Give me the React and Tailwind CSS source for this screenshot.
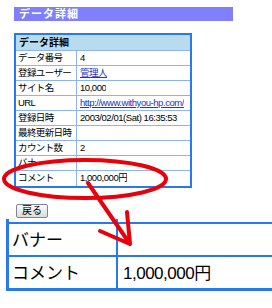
import React from "react";

const font = { fontFamily: '"Liberation Sans", "Noto Sans CJK JP", sans-serif' };

const rows = [
  ["データ番号", "4"],
  ["登録ユーザー", { link: "管理人" }],
  ["サイト名", "10,000"],
  ["URL", { link: "http://www.withyou-hp.com/" }],
  ["登録日時", "2003/02/01(Sat) 16:35:53"],
  ["最終更新日時", ""],
  ["カウント数", "2"],
  ["バナー", ""],
  ["コメント", "1,000,000円"],
];

export default function App() {
  return (
    <div
      className="relative w-[272px] h-[308px] bg-white overflow-hidden text-black"
      style={font}
    >
      <div className="mt-[7px] ml-[14px] w-[219px] h-[14px] bg-[#8080ff] text-white text-[11px] font-bold leading-[14px] pl-[5px] tracking-[1px]">
        データ詳細
      </div>

      <div className="mt-[12px] ml-[14px] w-[178px] border-2 border-[#2a78f0]">
        <div className="h-[16px] bg-[#b8dcee] border-b border-[#8cb4f4] text-[10px] font-bold leading-[16px] pl-[3px]">
          データ詳細
        </div>
        {rows.map(([k, v], i) => (
          <div
            key={i}
            className={
              "flex h-[15px] text-[9.5px] leading-[14px] " +
              (i < rows.length - 1 ? "border-b border-[#8cb4f4]" : "")
            }
          >
            <div className="w-[61px] shrink-0 border-r border-[#8cb4f4] pl-[2px] whitespace-nowrap overflow-hidden tracking-[-0.6px]">
              {k}
            </div>
            <div className="pl-[3px] whitespace-nowrap overflow-hidden tracking-[-0.45px]">
              {typeof v === "object" ? (
                <span className="text-[#2233cc] underline">{v.link}</span>
              ) : (
                v
              )}
            </div>
          </div>
        ))}
      </div>

      <div className="mt-[16px] ml-[16px] w-[32px] h-[14px] border border-[#7a8696] rounded-[2px] bg-gradient-to-b from-[#fafafa] to-[#dcdcdc] text-[10px] leading-[12px] text-center">
        戻る
      </div>

      <div className="mt-[1px] ml-[6px] border-l-[3px] border-[#2a78f0] w-[280px]">
        <div className="flex h-[5px] border-b-2 border-[#2a78f0]">
          <div className="w-[109px] border-r-2 border-[#2a78f0]" />
        </div>
        <div className="flex h-[33px] border-b-2 border-[#2a78f0] text-[17px] leading-[33px]">
          <div className="w-[109px] border-r-2 border-[#2a78f0] pl-[3px]">バナー</div>
          <div className="pl-[6px]"></div>
        </div>
        <div className="flex h-[34px] border-b-[3px] border-[#2a78f0] text-[17px] leading-[33px]">
          <div className="w-[109px] border-r-2 border-[#2a78f0] pl-[3px]">コメント</div>
          <div className="pl-[5px] tracking-[-0.5px]">1,000,000円</div>
        </div>
      </div>

      <svg
        className="absolute left-0 top-0"
        width="272"
        height="308"
        viewBox="0 0 272 308"
      >
        <ellipse
          cx="85"
          cy="179"
          rx="81"
          ry="19"
          fill="none"
          stroke="#e8000b"
          strokeWidth="4"
        />
        <path
          d="M88 183 L130 244 M127 212 L130 244 L100 231"
          fill="none"
          stroke="#e8000b"
          strokeWidth="4"
          strokeLinecap="round"
          strokeLinejoin="round"
        />
      </svg>
    </div>
  );
}
